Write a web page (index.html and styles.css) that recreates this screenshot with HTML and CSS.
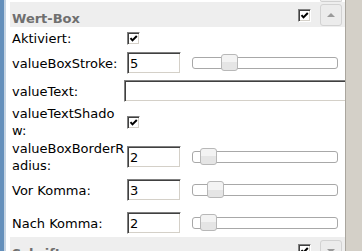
FILE: index.html
```html
<!DOCTYPE html>
<html lang="de">
<head>
<meta charset="utf-8">
<title>Wert-Box</title>
<link rel="stylesheet" href="styles.css">
</head>
<body>
<div class="app">
  <div class="edge-blue"></div>
  <div class="edge-light"></div>
  <div class="panel">
    <div class="prev-edge"><span class="prev-btn"></span></div>
    <div class="head">
      <span class="title">Wert-Box</span>
      <span class="chk"><svg viewBox="0 0 11 11" width="11" height="11"><polyline points="2.5,5.2 4.5,7.4 8.8,3" fill="none" stroke="#000" stroke-width="2"/></svg></span>
      <span class="hbtn"><span class="tri-up"></span></span>
    </div>
    <div class="rows">
      <div class="row r-a">
        <span class="lbl">Aktiviert:</span>
        <div class="val"><span class="chk"><svg viewBox="0 0 11 11" width="11" height="11"><polyline points="2.5,5.2 4.5,7.4 8.8,3" fill="none" stroke="#000" stroke-width="2"/></svg></span></div>
      </div>
      <div class="row r-b">
        <span class="lbl">valueBoxStroke:</span>
        <div class="val"><input class="tin" type="text" value="5"><div class="slider"><span class="thumb" style="left:28px"></span></div></div>
      </div>
      <div class="row r-c">
        <span class="lbl">valueText:</span>
        <div class="val"><input class="tin wide" type="text" value=""></div>
      </div>
      <div class="row r-d">
        <span class="lbl">valueTextShadow:</span>
        <div class="val"><span class="chk"><svg viewBox="0 0 11 11" width="11" height="11"><polyline points="2.5,5.2 4.5,7.4 8.8,3" fill="none" stroke="#000" stroke-width="2"/></svg></span></div>
      </div>
      <div class="row r-e">
        <span class="lbl">valueBoxBorderRadius:</span>
        <div class="val"><input class="tin" type="text" value="2"><div class="slider"><span class="thumb" style="left:7px"></span></div></div>
      </div>
      <div class="row r-f">
        <span class="lbl">Vor Komma:</span>
        <div class="val"><input class="tin" type="text" value="3"><div class="slider"><span class="thumb" style="left:14px"></span></div></div>
      </div>
      <div class="row r-g">
        <span class="lbl">Nach Komma:</span>
        <div class="val"><input class="tin" type="text" value="2"><div class="slider"><span class="thumb" style="left:7px"></span></div></div>
      </div>
    </div>
    <div class="head head-b">
      <span class="title">Schriften</span>
      <span class="chk"><svg viewBox="0 0 11 11" width="11" height="11"><polyline points="2.5,5.2 4.5,7.4 8.8,3" fill="none" stroke="#000" stroke-width="2"/></svg></span>
      <span class="hbtn"><span class="tri-down"></span></span>
    </div>
  </div>
  <div class="scroll"></div>
</div>
</body>
</html>
```
FILE: styles.css
```css
* { box-sizing: border-box; }
html, body { margin: 0; padding: 0; }
body {
  width: 362px;
  height: 251px;
  overflow: hidden;
  background: #fff;
  font-family: "DejaVu Sans", Verdana, sans-serif;
  font-size: 13px;
  color: #000;
}
.app { display: flex; height: 251px; }
.edge-blue { width: 4px; background: #6590bb; flex: none; }
.edge-light { width: 2px; background: #c6d4e2; flex: none; }
.panel {
  width: 339px;
  flex: none;
  padding-left: 4px;
  overflow: hidden;
}
.scroll {
  width: 17px;
  flex: none;
  background: #d4d0c8;
  border-left: 1px solid #aaa69e;
}
.prev-edge { height: 2px; display: flex; }
.prev-btn {
  margin-left: 310px;
  width: 22px;
  height: 2px;
  border: 1px solid #d0d0d0;
  border-top: none;
  border-radius: 0 0 3px 3px;
  background: #eeeeee;
}
.head {
  height: 25px;
  background: #eeeeee;
  display: flex;
  align-items: flex-start;
  padding-left: 2px;
}
.head-b { height: 30px; }
.title {
  width: 286px;
  margin-top: 8px;
  font-weight: bold;
  color: #6f6f6f;
  line-height: 17px;
  white-space: nowrap;
}
.head .chk { margin-top: 7px; margin-left: 0; }
.hbtn {
  margin-left: 9px;
  margin-top: 2px;
  width: 22px;
  height: 22px;
  border: 1px solid #d2d2d2;
  border-radius: 3px;
  background: #ececec;
  display: flex;
  align-items: center;
  justify-content: center;
}
.head-b .hbtn { margin-top: 3px; }
.tri-up {
  width: 0; height: 0;
  border-left: 4px solid transparent;
  border-right: 4px solid transparent;
  border-bottom: 4px solid #9a9a9a;
}
.tri-down {
  width: 0; height: 0;
  border-left: 4px solid transparent;
  border-right: 4px solid transparent;
  border-top: 4px solid #9a9a9a;
}
.chk {
  display: block;
  width: 13px;
  height: 13px;
  margin-left: 1px;
  border: 1px solid;
  border-color: #808080 #ffffff #ffffff #808080;
  box-shadow: inset 1px 1px #404040, inset -1px -1px #d4d0c8;
  background: #fff;
  flex: none;
}
.chk svg { display: block; }
.row {
  display: flex;
  align-items: center;
  padding-left: 2px;
}
.r-a { height: 22px; }
.r-b { height: 28px; }
.r-c { height: 28px; }
.r-d { height: 34px; }
.r-e { height: 36px; }
.r-f { height: 30px; }
.r-g { height: 32px; padding-top: 4px; }
.lbl {
  width: 114px;
  flex: none;
  line-height: 17px;
  word-break: break-all;
}
.val { display: flex; align-items: center; }
.tin {
  width: 54px;
  height: 22px;
  margin: 0 0 0 1px;
  padding: 0 0 0 2px;
  border: 1px solid;
  border-color: #808080 #ffffff #ffffff #808080;
  box-shadow: inset 1px 1px #404040, inset -1px -1px #d4d0c8;
  background: #fff;
  font-family: "DejaVu Sans", Verdana, sans-serif;
  font-size: 13px;
  color: #000;
  outline: none;
  flex: none;
}
.tin.wide { width: 230px; margin-left: -2px; }
.slider {
  position: relative;
  margin-left: 11px;
  width: 146px;
  height: 12px;
  border: 1px solid #a8a8a8;
  border-radius: 3px;
  background: #fff;
  flex: none;
}
.thumb {
  position: absolute;
  top: -4px;
  width: 17px;
  height: 17px;
  border: 1px solid #b8b8b8;
  border-radius: 3px;
  background: linear-gradient(#f3f3f3 50%, #e5e5e5 50%);
}
```
